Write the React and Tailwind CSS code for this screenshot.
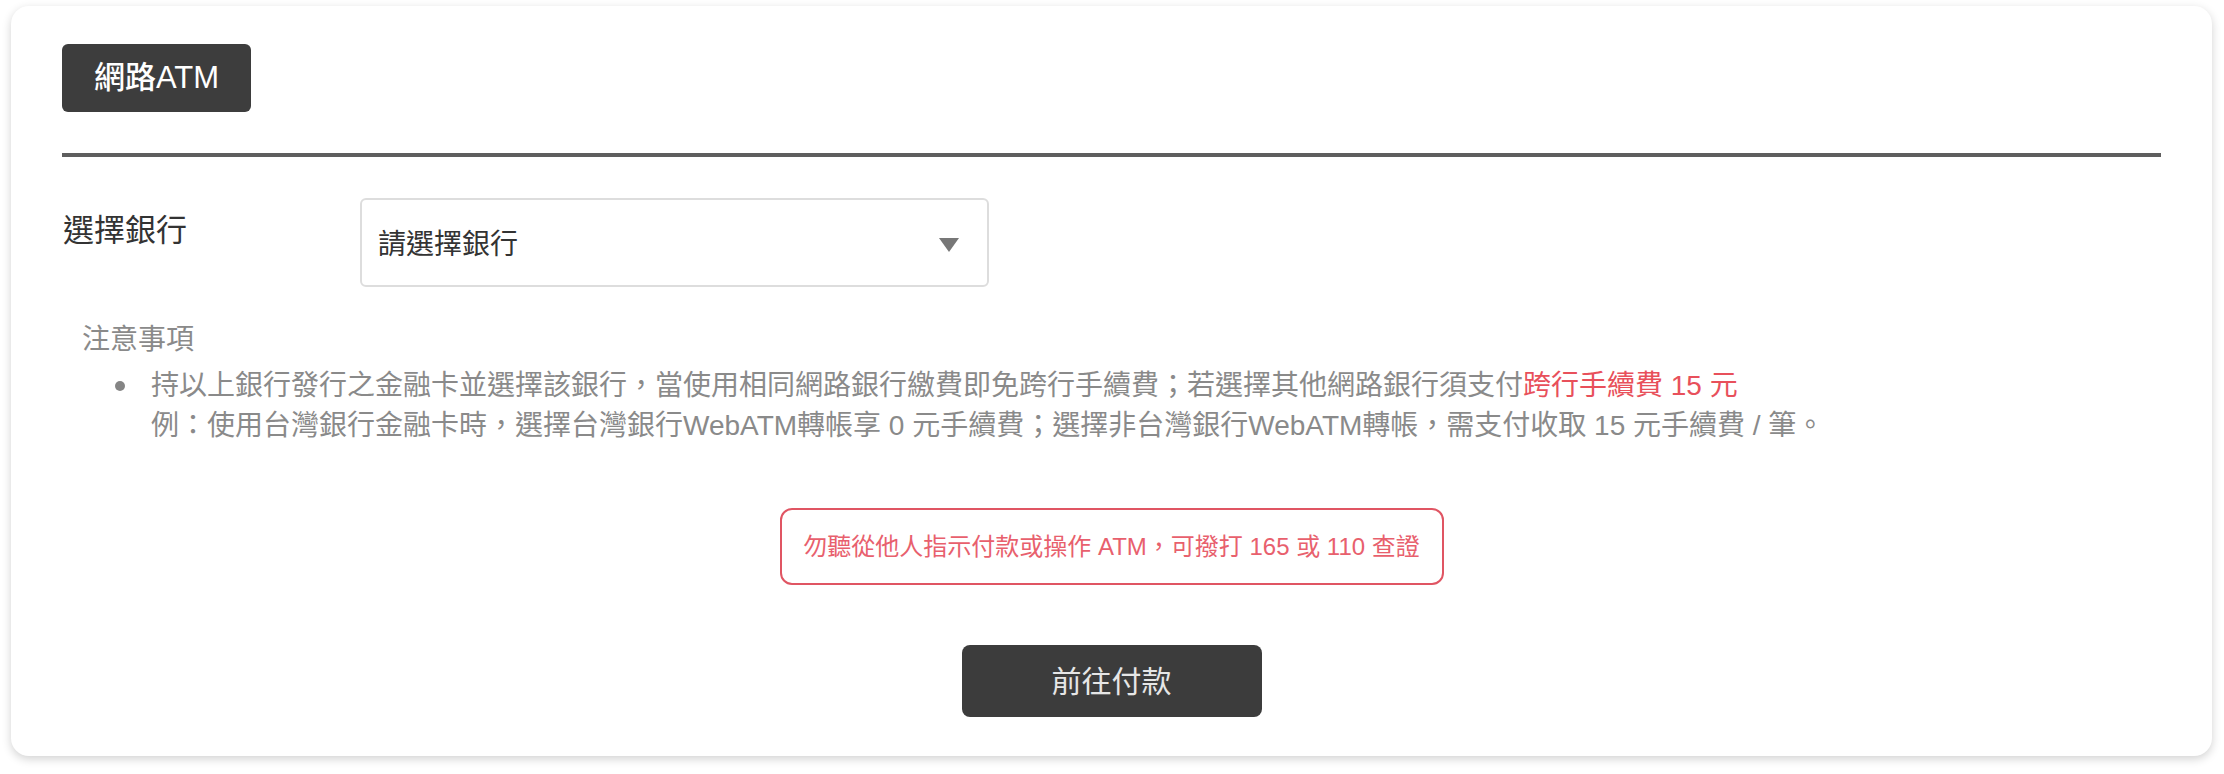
export default function App() {
  const font = { fontFamily: '"Liberation Sans", "Noto Sans CJK TC", sans-serif' };
  return (
    <div lang="zh-Hant-TW" className="w-[2224px] h-[774px] bg-white overflow-hidden" style={font}>
      <div className="ml-[11px] mt-[6px] w-[2201px] h-[750px] rounded-[18px] bg-white shadow-[0_3px_10px_rgba(0,0,0,0.18)] px-[51px] pt-[38px] flex flex-col">
        <div className="flex">
          <div className="h-[68px] w-[189px] rounded-[6px] bg-[#3d3d3d] text-white text-[31px] font-medium flex items-center justify-center">
            網路ATM
          </div>
        </div>
        <div className="mt-[41px] h-[4px] bg-[#5e5e5e]" />
        <div className="mt-[41px] flex items-start">
          <div className="w-[298px] pt-[9px] pl-[1px] text-[31px] leading-[48px] text-[#333]">選擇銀行</div>
          <div className="w-[629px] h-[89px] rounded-[6px] border-2 border-[#dddddd] flex items-center justify-between pl-[16px] pr-[28px]">
            <span className="text-[28px] text-[#333] pt-[4px]">請選擇銀行</span>
            <svg width="20" height="14" viewBox="0 0 20 14" className="mt-[4px]">
              <polygon points="0,0 20,0 10,14" fill="#777777" />
            </svg>
          </div>
        </div>
        <div className="mt-[33px] pl-[20px] text-[28px] leading-[40px] text-[#8a8a8a]">注意事項</div>
        <div className="mt-[6px] flex text-[28px] leading-[40px] text-[#8a8a8a]">
          <div className="w-[89px] flex justify-end pr-[26px] pt-[15px]">
            <span className="block w-[10px] h-[10px] rounded-full bg-[#858585]" />
          </div>
          <div>
            持以上銀行發行之金融卡並選擇該銀行，當使用相同網路銀行繳費即免跨行手續費；若選擇其他網路銀行須支付
            <span className="text-[#e8505b]">跨行手續費 15 元</span>
            <br />
            例：使用台灣銀行金融卡時，選擇台灣銀行WebATM轉帳享 0 元手續費；選擇非台灣銀行WebATM轉帳，需支付收取 15 元手續費 / 筆。
          </div>
        </div>
        <div className="mt-[62px] flex justify-center">
          <div className="w-[664px] h-[77px] rounded-[12px] border-2 border-[#e05563] flex items-center justify-center text-[24px] text-[#e8606d]">
            勿聽從他人指示付款或操作 ATM，可撥打 165 或 110 查證
          </div>
        </div>
        <div className="mt-[60px] flex justify-center">
          <div className="w-[300px] h-[72px] rounded-[8px] bg-[#3c3c3c] text-[#e6e6e6] text-[30px] flex items-center justify-center">
            前往付款
          </div>
        </div>
      </div>
    </div>
  );
}
